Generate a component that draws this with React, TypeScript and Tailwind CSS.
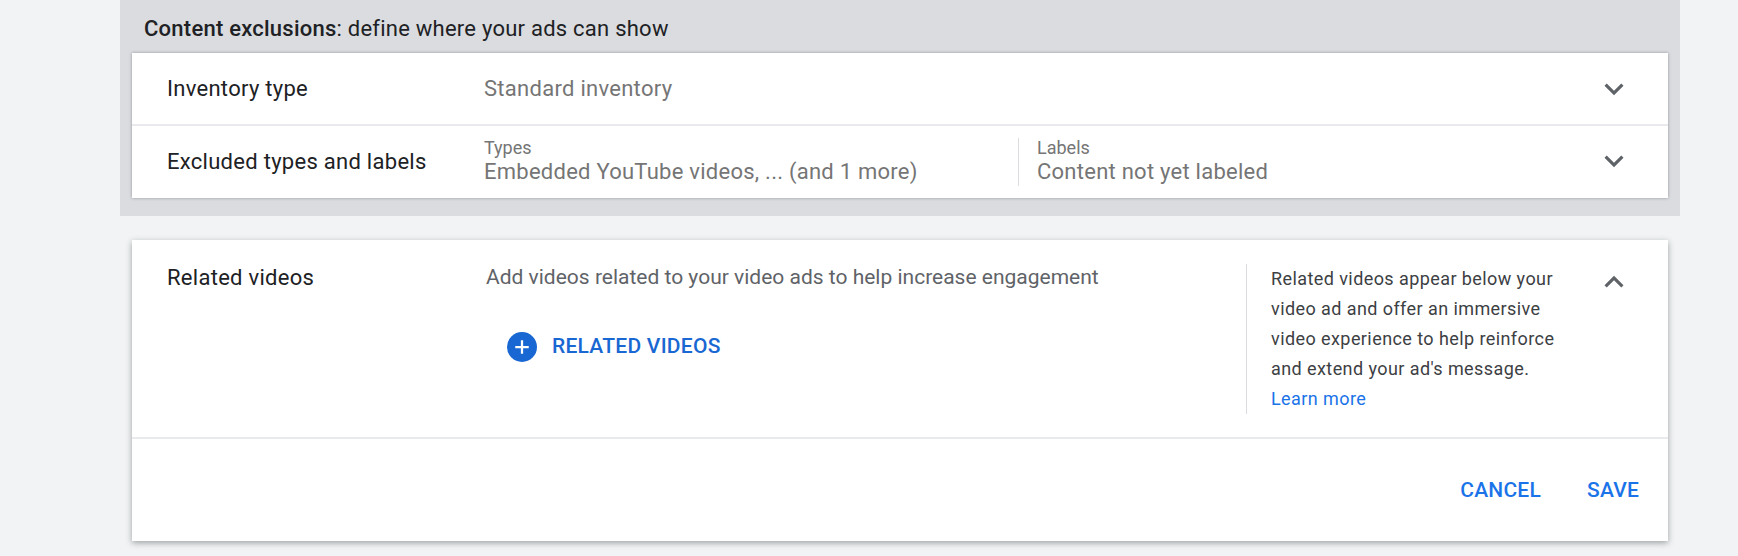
import React from 'react';

const Chevron: React.FC<{ up?: boolean }> = ({ up }) => (
  <svg width="38" height="38" viewBox="0 0 24 24" className="flex-none fill-[#5f6368]">
    {up ? (
      <path d="M7.41 15.41 12 10.83l4.59 4.58L18 14l-6-6-6 6z" />
    ) : (
      <path d="M7.41 8.59 12 13.17l4.59-4.58L18 10l-6 6-6-6z" />
    )}
  </svg>
);

const App: React.FC = () => {
  return (
    <div className="h-[556px] w-[1738px] overflow-hidden bg-[#f1f3f4] pl-[120px] font-['Roboto',sans-serif]">
      {/* Content exclusions */}
      <div className="h-[216px] w-[1560px] bg-[#dadce0] px-3">
        <div className="flex h-[53px] items-center pl-3 pt-[4px] text-[22px] tracking-[0.24px] text-[#202124]">
          <span className="font-medium">Content exclusions</span>: define where your ads can show
        </div>
        <div className="w-[1536px] bg-white shadow-[0_0_3px_rgba(60,64,67,0.45)]">
          <div className="flex h-[73px] items-center border-b-2 border-[#e8eaed] pl-[35px] pr-[35px]">
            <div className="w-[317px] text-[22px] tracking-[0.28px] text-[#202124]">Inventory type</div>
            <div className="flex-1 text-[22px] tracking-[0.28px] text-[#757575]">Standard inventory</div>
            <Chevron />
          </div>
          <div className="flex h-[72px] items-center pl-[35px] pr-[35px]">
            <div className="w-[317px] pb-[2px] text-[22px] tracking-[0.28px] text-[#202124]">Excluded types and labels</div>
            <div className="h-[48px] w-[535px] border-r border-[#dadce0] text-[#757575]">
              <div className="text-[18px] leading-[20px]">Types</div>
              <div className="text-[22px] leading-[28px] tracking-[0.25px]">Embedded YouTube videos, ... (and 1 more)</div>
            </div>
            <div className="h-[48px] flex-1 pl-[18px] text-[#757575]">
              <div className="text-[18px] leading-[20px]">Labels</div>
              <div className="text-[22px] leading-[28px] tracking-[0.25px]">Content not yet labeled</div>
            </div>
            <div className="pb-[2px]">
              <Chevron />
            </div>
          </div>
        </div>
      </div>

      {/* Related videos */}
      <div className="ml-3 mt-6 h-[301px] w-[1536px] bg-white shadow-[0_2px_6px_rgba(60,64,67,0.45)]">
        <div className="flex h-[199px] border-b-2 border-[#e8eaed] pl-[35px] pr-[35px] pt-6">
          <div className="w-[319px] text-[22px] leading-[28px] tracking-[0.28px] text-[#202124]">Related videos</div>
          <div className="w-[760px]">
            <div className="text-[21px] leading-[26px] text-[#5f6368]">
              Add videos related to your video ads to help increase engagement
            </div>
            <div className="mt-[41px] flex items-center pl-[21px]">
              <div className="flex h-[30px] w-[30px] items-center justify-center rounded-full bg-[#1967d2]">
                <svg width="18" height="18" viewBox="0 0 16 16" className="fill-white">
                  <path d="M7 2h2v5h5v2H9v5H7V9H2V7h5z" />
                </svg>
              </div>
              <span className="ml-[15px] text-[21px] font-medium tracking-[0.25px] text-[#1967d2]">RELATED VIDEOS</span>
            </div>
          </div>
          <div className="h-[150px] w-[320px] whitespace-nowrap border-l border-[#dadce0] pl-6 text-[18px] leading-[30px] tracking-[0.42px] text-[#3c4043]">
            Related videos appear below your
            <br />
            video ad and offer an immersive
            <br />
            video experience to help reinforce
            <br />
            and extend your ad's message.
            <br />
            <span className="text-[#1a73e8]">Learn more</span>
          </div>
          <div className="ml-auto -mt-[1px]">
            <Chevron up />
          </div>
        </div>
        <div className="flex h-[102px] items-center justify-end gap-[46px] pr-[29px] pt-[2px] text-[21px] font-medium tracking-[0.2px] text-[#1a73e8]">
          <span>CANCEL</span>
          <span>SAVE</span>
        </div>
      </div>
    </div>
  );
};

export default App;
